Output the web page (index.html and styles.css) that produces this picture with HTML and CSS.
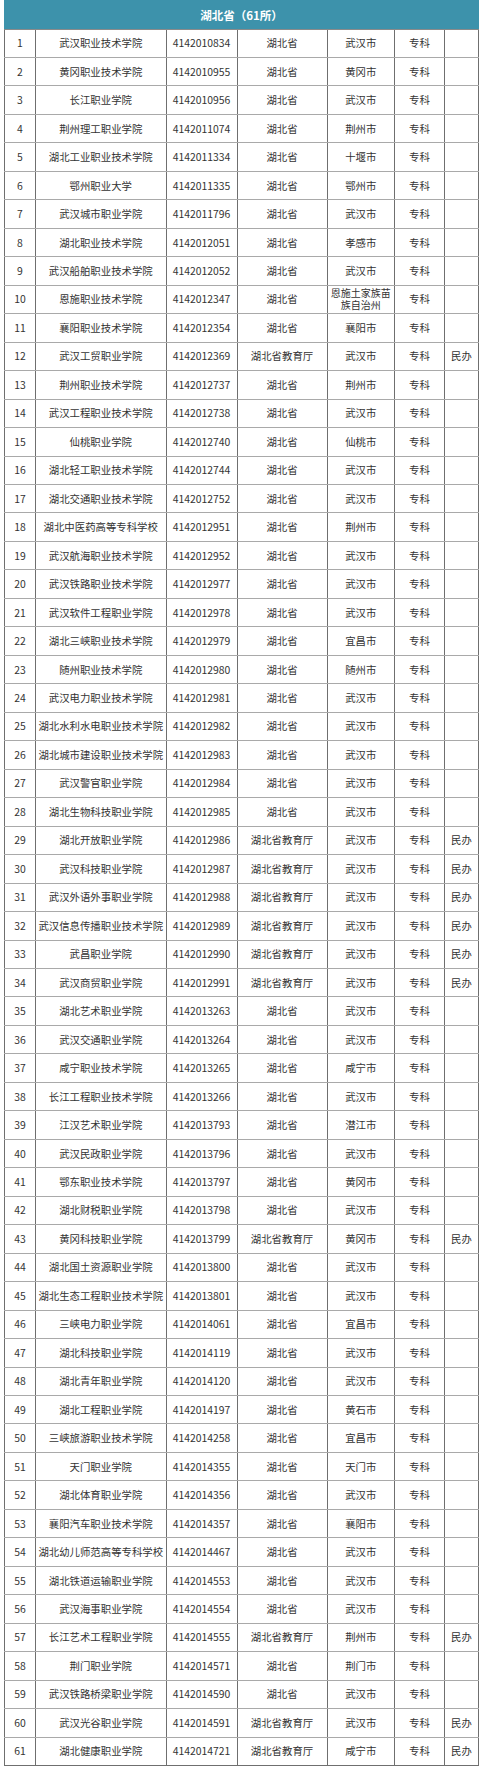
FILE: index.html
```html
<!DOCTYPE html>
<html lang="zh-CN">
<head>
<meta charset="utf-8">
<title>湖北省（61所）</title>
<link rel="stylesheet" href="styles.css">
</head>
<body>
<table class="list">
<colgroup>
<col class="c-no"><col class="c-name"><col class="c-code"><col class="c-dept"><col class="c-city"><col class="c-level"><col class="c-note">
</colgroup>
<thead>
<tr><th colspan="7" class="title">湖北省（61所）</th></tr>
</thead>
<tbody id="rows">
<tr><td>1</td><td>武汉职业技术学院</td><td>4142010834</td><td>湖北省</td><td>武汉市</td><td>专科</td><td></td></tr>
<tr><td>2</td><td>黄冈职业技术学院</td><td>4142010955</td><td>湖北省</td><td>黄冈市</td><td>专科</td><td></td></tr>
<tr><td>3</td><td>长江职业学院</td><td>4142010956</td><td>湖北省</td><td>武汉市</td><td>专科</td><td></td></tr>
<tr><td>4</td><td>荆州理工职业学院</td><td>4142011074</td><td>湖北省</td><td>荆州市</td><td>专科</td><td></td></tr>
<tr><td>5</td><td>湖北工业职业技术学院</td><td>4142011334</td><td>湖北省</td><td>十堰市</td><td>专科</td><td></td></tr>
<tr><td>6</td><td>鄂州职业大学</td><td>4142011335</td><td>湖北省</td><td>鄂州市</td><td>专科</td><td></td></tr>
<tr><td>7</td><td>武汉城市职业学院</td><td>4142011796</td><td>湖北省</td><td>武汉市</td><td>专科</td><td></td></tr>
<tr><td>8</td><td>湖北职业技术学院</td><td>4142012051</td><td>湖北省</td><td>孝感市</td><td>专科</td><td></td></tr>
<tr><td>9</td><td>武汉船舶职业技术学院</td><td>4142012052</td><td>湖北省</td><td>武汉市</td><td>专科</td><td></td></tr>
<tr><td>10</td><td>恩施职业技术学院</td><td>4142012347</td><td>湖北省</td><td class="two">恩施土家族苗<br>族自治州</td><td>专科</td><td></td></tr>
<tr><td>11</td><td>襄阳职业技术学院</td><td>4142012354</td><td>湖北省</td><td>襄阳市</td><td>专科</td><td></td></tr>
<tr><td>12</td><td>武汉工贸职业学院</td><td>4142012369</td><td>湖北省教育厅</td><td>武汉市</td><td>专科</td><td>民办</td></tr>
<tr><td>13</td><td>荆州职业技术学院</td><td>4142012737</td><td>湖北省</td><td>荆州市</td><td>专科</td><td></td></tr>
<tr><td>14</td><td>武汉工程职业技术学院</td><td>4142012738</td><td>湖北省</td><td>武汉市</td><td>专科</td><td></td></tr>
<tr><td>15</td><td>仙桃职业学院</td><td>4142012740</td><td>湖北省</td><td>仙桃市</td><td>专科</td><td></td></tr>
<tr><td>16</td><td>湖北轻工职业技术学院</td><td>4142012744</td><td>湖北省</td><td>武汉市</td><td>专科</td><td></td></tr>
<tr><td>17</td><td>湖北交通职业技术学院</td><td>4142012752</td><td>湖北省</td><td>武汉市</td><td>专科</td><td></td></tr>
<tr><td>18</td><td>湖北中医药高等专科学校</td><td>4142012951</td><td>湖北省</td><td>荆州市</td><td>专科</td><td></td></tr>
<tr><td>19</td><td>武汉航海职业技术学院</td><td>4142012952</td><td>湖北省</td><td>武汉市</td><td>专科</td><td></td></tr>
<tr><td>20</td><td>武汉铁路职业技术学院</td><td>4142012977</td><td>湖北省</td><td>武汉市</td><td>专科</td><td></td></tr>
<tr><td>21</td><td>武汉软件工程职业学院</td><td>4142012978</td><td>湖北省</td><td>武汉市</td><td>专科</td><td></td></tr>
<tr><td>22</td><td>湖北三峡职业技术学院</td><td>4142012979</td><td>湖北省</td><td>宜昌市</td><td>专科</td><td></td></tr>
<tr><td>23</td><td>随州职业技术学院</td><td>4142012980</td><td>湖北省</td><td>随州市</td><td>专科</td><td></td></tr>
<tr><td>24</td><td>武汉电力职业技术学院</td><td>4142012981</td><td>湖北省</td><td>武汉市</td><td>专科</td><td></td></tr>
<tr><td>25</td><td>湖北水利水电职业技术学院</td><td>4142012982</td><td>湖北省</td><td>武汉市</td><td>专科</td><td></td></tr>
<tr><td>26</td><td>湖北城市建设职业技术学院</td><td>4142012983</td><td>湖北省</td><td>武汉市</td><td>专科</td><td></td></tr>
<tr><td>27</td><td>武汉警官职业学院</td><td>4142012984</td><td>湖北省</td><td>武汉市</td><td>专科</td><td></td></tr>
<tr><td>28</td><td>湖北生物科技职业学院</td><td>4142012985</td><td>湖北省</td><td>武汉市</td><td>专科</td><td></td></tr>
<tr><td>29</td><td>湖北开放职业学院</td><td>4142012986</td><td>湖北省教育厅</td><td>武汉市</td><td>专科</td><td>民办</td></tr>
<tr><td>30</td><td>武汉科技职业学院</td><td>4142012987</td><td>湖北省教育厅</td><td>武汉市</td><td>专科</td><td>民办</td></tr>
<tr><td>31</td><td>武汉外语外事职业学院</td><td>4142012988</td><td>湖北省教育厅</td><td>武汉市</td><td>专科</td><td>民办</td></tr>
<tr><td>32</td><td>武汉信息传播职业技术学院</td><td>4142012989</td><td>湖北省教育厅</td><td>武汉市</td><td>专科</td><td>民办</td></tr>
<tr><td>33</td><td>武昌职业学院</td><td>4142012990</td><td>湖北省教育厅</td><td>武汉市</td><td>专科</td><td>民办</td></tr>
<tr><td>34</td><td>武汉商贸职业学院</td><td>4142012991</td><td>湖北省教育厅</td><td>武汉市</td><td>专科</td><td>民办</td></tr>
<tr><td>35</td><td>湖北艺术职业学院</td><td>4142013263</td><td>湖北省</td><td>武汉市</td><td>专科</td><td></td></tr>
<tr><td>36</td><td>武汉交通职业学院</td><td>4142013264</td><td>湖北省</td><td>武汉市</td><td>专科</td><td></td></tr>
<tr><td>37</td><td>咸宁职业技术学院</td><td>4142013265</td><td>湖北省</td><td>咸宁市</td><td>专科</td><td></td></tr>
<tr><td>38</td><td>长江工程职业技术学院</td><td>4142013266</td><td>湖北省</td><td>武汉市</td><td>专科</td><td></td></tr>
<tr><td>39</td><td>江汉艺术职业学院</td><td>4142013793</td><td>湖北省</td><td>潜江市</td><td>专科</td><td></td></tr>
<tr><td>40</td><td>武汉民政职业学院</td><td>4142013796</td><td>湖北省</td><td>武汉市</td><td>专科</td><td></td></tr>
<tr><td>41</td><td>鄂东职业技术学院</td><td>4142013797</td><td>湖北省</td><td>黄冈市</td><td>专科</td><td></td></tr>
<tr><td>42</td><td>湖北财税职业学院</td><td>4142013798</td><td>湖北省</td><td>武汉市</td><td>专科</td><td></td></tr>
<tr><td>43</td><td>黄冈科技职业学院</td><td>4142013799</td><td>湖北省教育厅</td><td>黄冈市</td><td>专科</td><td>民办</td></tr>
<tr><td>44</td><td>湖北国土资源职业学院</td><td>4142013800</td><td>湖北省</td><td>武汉市</td><td>专科</td><td></td></tr>
<tr><td>45</td><td>湖北生态工程职业技术学院</td><td>4142013801</td><td>湖北省</td><td>武汉市</td><td>专科</td><td></td></tr>
<tr><td>46</td><td>三峡电力职业学院</td><td>4142014061</td><td>湖北省</td><td>宜昌市</td><td>专科</td><td></td></tr>
<tr><td>47</td><td>湖北科技职业学院</td><td>4142014119</td><td>湖北省</td><td>武汉市</td><td>专科</td><td></td></tr>
<tr><td>48</td><td>湖北青年职业学院</td><td>4142014120</td><td>湖北省</td><td>武汉市</td><td>专科</td><td></td></tr>
<tr><td>49</td><td>湖北工程职业学院</td><td>4142014197</td><td>湖北省</td><td>黄石市</td><td>专科</td><td></td></tr>
<tr><td>50</td><td>三峡旅游职业技术学院</td><td>4142014258</td><td>湖北省</td><td>宜昌市</td><td>专科</td><td></td></tr>
<tr><td>51</td><td>天门职业学院</td><td>4142014355</td><td>湖北省</td><td>天门市</td><td>专科</td><td></td></tr>
<tr><td>52</td><td>湖北体育职业学院</td><td>4142014356</td><td>湖北省</td><td>武汉市</td><td>专科</td><td></td></tr>
<tr><td>53</td><td>襄阳汽车职业技术学院</td><td>4142014357</td><td>湖北省</td><td>襄阳市</td><td>专科</td><td></td></tr>
<tr><td>54</td><td>湖北幼儿师范高等专科学校</td><td>4142014467</td><td>湖北省</td><td>武汉市</td><td>专科</td><td></td></tr>
<tr><td>55</td><td>湖北铁道运输职业学院</td><td>4142014553</td><td>湖北省</td><td>武汉市</td><td>专科</td><td></td></tr>
<tr><td>56</td><td>武汉海事职业学院</td><td>4142014554</td><td>湖北省</td><td>武汉市</td><td>专科</td><td></td></tr>
<tr><td>57</td><td>长江艺术工程职业学院</td><td>4142014555</td><td>湖北省教育厅</td><td>荆州市</td><td>专科</td><td>民办</td></tr>
<tr><td>58</td><td>荆门职业学院</td><td>4142014571</td><td>湖北省</td><td>荆门市</td><td>专科</td><td></td></tr>
<tr><td>59</td><td>武汉铁路桥梁职业学院</td><td>4142014590</td><td>湖北省</td><td>武汉市</td><td>专科</td><td></td></tr>
<tr><td>60</td><td>武汉光谷职业学院</td><td>4142014591</td><td>湖北省教育厅</td><td>武汉市</td><td>专科</td><td>民办</td></tr>
<tr><td>61</td><td>湖北健康职业学院</td><td>4142014721</td><td>湖北省教育厅</td><td>咸宁市</td><td>专科</td><td>民办</td></tr>
</tbody>
</table>
</body>
</html>
```

FILE: styles.css
```css
html, body {
  margin: 0;
  padding: 0;
  background: #ffffff;
}

body {
  font-family: "Noto Sans CJK SC", "Noto Sans", sans-serif;
  color: #333333;
}

.list {
  margin: 0 0 0 4px;
  width: 474px;
  table-layout: fixed;
  border-collapse: collapse;
  font-size: 10.4px;
}

.c-no { width: 31px; }
.c-name { width: 130.5px; }
.c-code { width: 71px; }
.c-dept { width: 90px; }
.c-city { width: 67.5px; }
.c-level { width: 50px; }
.c-note { width: 34px; }

.title {
  height: 27.5px;
  padding: 0;
  background: #3d92ab;
  color: #ffffff;
  font-weight: bold;
  font-size: 11.5px;
  line-height: 14px;
  text-align: center;
  vertical-align: middle;
  border: 1px solid #3d92ab;
  border-bottom: 1px solid #8a8a8a;
}

.list td {
  height: 27.47px;
  padding: 0 1px;
  text-align: center;
  vertical-align: middle;
  white-space: nowrap;
  line-height: 14px;
  border-left: 1px solid #6f6f6f;
  border-right: 1px solid #6f6f6f;
  border-top: 1px solid #a9a9a9;
  border-bottom: 1px solid #a9a9a9;
}

.list tr:last-child td {
  border-bottom-color: #6f6f6f;
}

.list td.two {
  font-size: 10px;
  line-height: 12.5px;
}
```
